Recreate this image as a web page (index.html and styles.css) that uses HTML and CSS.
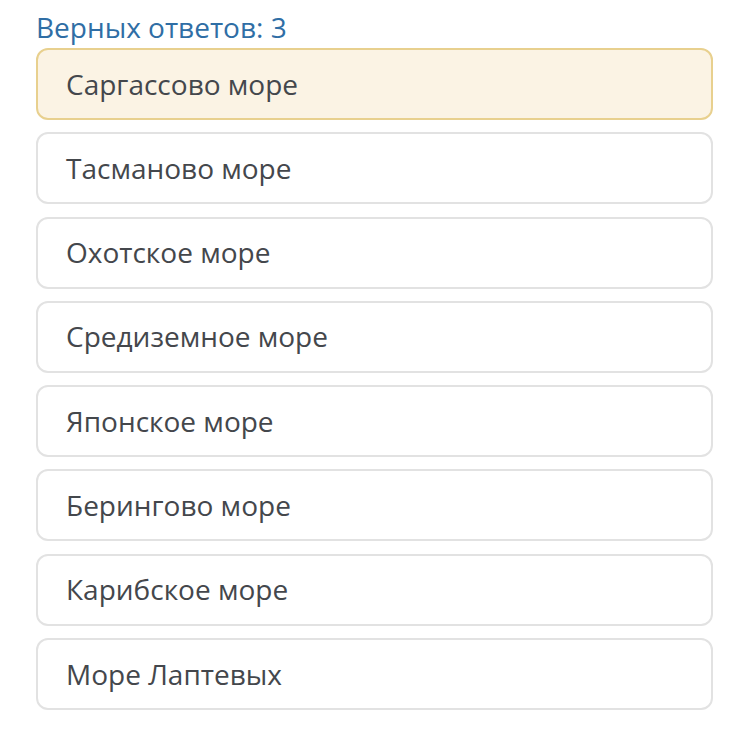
FILE: index.html
```html
<!DOCTYPE html>
<html lang="ru">
<head>
<meta charset="utf-8">
<link rel="stylesheet" href="styles.css">
</head>
<body>
<div class="quiz">
  <div class="title">Верных ответов: 3</div>
  <ul class="options">
    <li class="option option--selected">Саргассово море</li>
    <li class="option">Тасманово море</li>
    <li class="option">Охотское море</li>
    <li class="option">Средиземное море</li>
    <li class="option">Японское море</li>
    <li class="option">Берингово море</li>
    <li class="option">Карибское море</li>
    <li class="option">Море Лаптевых</li>
  </ul>
</div>
</body>
</html>
```

FILE: styles.css
```css
html, body {
  margin: 0;
  padding: 0;
  background: #ffffff;
}
body {
  font-family: "Open Sans", "Noto Sans", sans-serif;
}
.quiz {
  padding: 9px 37px 0 36px;
}
.title {
  font-size: 28px;
  line-height: 36px;
  color: #2f6ea5;
  margin-bottom: 3px;
}
.options {
  list-style: none;
  margin: 0;
  padding: 0;
  display: flex;
  flex-direction: column;
  gap: 12.3px;
}
.option {
  box-sizing: border-box;
  height: 72px;
  display: flex;
  align-items: center;
  padding: 0 0 1px 28px;
  border: 2px solid #e2e2e2;
  border-radius: 12px;
  background: #ffffff;
  font-size: 28px;
  color: #44474c;
}
.option--selected {
  background: #fbf3e4;
  border-color: #e8d08e;
}
```
